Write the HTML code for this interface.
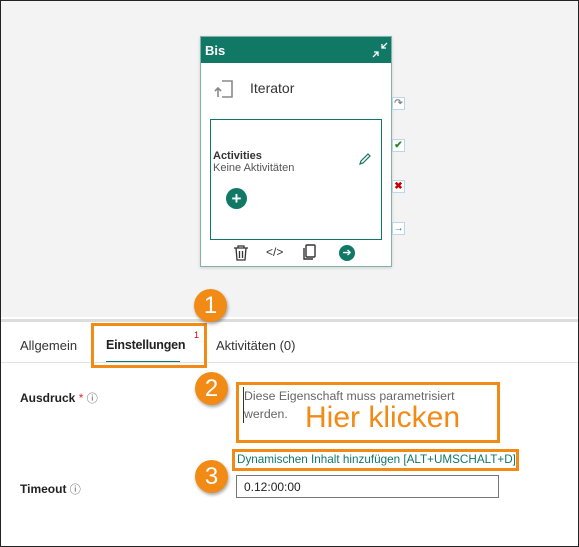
<!DOCTYPE html>
<html><head><meta charset="utf-8"><style>
*{margin:0;padding:0;box-sizing:border-box}
body{width:579px;height:547px;position:relative;overflow:hidden;font-family:"Liberation Sans",sans-serif;background:#fff}
.abs{position:absolute}
.frame{left:0;top:0;width:579px;height:547px;border:1px solid #222;}
.circ{width:33px;height:33px;border-radius:50%;background:#f28a16;color:#fff;font-size:24px;text-align:center;line-height:33px;box-shadow:1px 2px 3px rgba(0,0,0,.35)}
.ob{border:3px solid #f28a16}
.side{width:13px;height:13px;background:#fff;border:1px solid #bcd6f0;font-size:10px;line-height:11px;text-align:center;font-weight:bold}
</style></head><body>
<div class="abs" style="left:0;top:0;width:579px;height:317px;background:#f3f3f3"></div>
<div class="abs" style="left:0;top:319px;width:579px;height:3px;background:#ddd"></div>
<!-- card -->
<div class="abs" style="left:200px;top:36px;width:192px;height:231px;background:#fff;border:1px solid #7fb3aa;box-shadow:0 1px 3px rgba(0,0,0,.15)"></div>
<div class="abs" style="left:201px;top:37px;width:190px;height:26px;background:#117865;color:#fff;font-size:13px;font-weight:bold;padding:6px 0 0 4px">Bis</div>
<svg class="abs" style="left:370px;top:40px" width="20" height="20" viewBox="0 0 20 20" fill="none" stroke="#fff" stroke-width="1.3"><path d="M3 17l5-5M4 12h4v4M17 3l-5 5M12 4v4h4"/></svg>
<svg class="abs" style="left:214px;top:79px" width="20" height="20" viewBox="0 0 20 20" fill="none" stroke="#888" stroke-width="1.6"><path d="M8 2h10v16H8M4 18v-8M1 12l3-3 3 3"/></svg>
<div class="abs" style="left:250px;top:80px;font-size:14px;color:#333">Iterator</div>
<div class="abs" style="left:210px;top:119px;width:172px;height:121px;border:1px solid #117865"></div>
<div class="abs" style="left:213px;top:150px;font-size:11px;font-weight:bold;color:#333">Activities</div>
<div class="abs" style="left:213px;top:162px;font-size:11px;color:#555">Keine Aktivitäten</div>
<svg class="abs" style="left:358px;top:152px" width="14" height="14" viewBox="0 0 14 14" fill="none" stroke="#117865" stroke-width="1.2"><path d="M2 12l1-3 7-7 2 2-7 7z"/></svg>
<div class="abs" style="left:226px;top:188px;width:21px;height:21px;border-radius:50%;background:#117865;color:#fff;text-align:center;font-size:17px;line-height:21px;font-weight:bold">+</div>
<svg class="abs" style="left:233px;top:244px" width="16" height="18" viewBox="0 0 16 18" fill="none" stroke="#333" stroke-width="1.3"><path d="M1 4h14M5 4V2h6v2M3 4l1 12h8l1-12M6.5 7v7M9.5 7v7"/></svg>
<div class="abs" style="left:266px;top:245px;font-size:12px;color:#333">&lt;/&gt;</div>
<svg class="abs" style="left:301px;top:244px" width="16" height="18" viewBox="0 0 16 18" fill="none" stroke="#333" stroke-width="1.4"><rect x="5" y="1" width="9" height="12" rx="1"/><path d="M3 4v11h9"/></svg>
<div class="abs" style="left:339px;top:245px;width:16px;height:16px;border-radius:50%;background:#117865;color:#fff;font-size:11px;text-align:center;line-height:16px">➔</div>
<div class="abs side" style="left:392px;top:97px;color:#888">↷</div>
<div class="abs side" style="left:392px;top:139px;color:#2a8a2a">✔</div>
<div class="abs side" style="left:392px;top:180px;color:#c00">✖</div>
<div class="abs side" style="left:392px;top:222px;color:#1a6fd0">→</div>
<!-- tabs -->
<div class="abs" style="left:20px;top:338px;font-size:13px;color:#333">Allgemein</div>
<div class="abs" style="left:106px;top:338px;font-size:12.5px;font-weight:bold;color:#222;letter-spacing:-0.2px">Einstellungen</div>
<div class="abs" style="left:194px;top:330px;font-size:9px;color:#d00">1</div>
<div class="abs" style="left:106px;top:361px;width:74px;height:2px;background:#117865"></div>
<div class="abs" style="left:216px;top:338px;font-size:13px;color:#333">Aktivitäten (0)</div>
<div class="abs" style="left:0;top:362px;width:579px;height:1px;background:#e2e2e2"></div>
<div class="abs ob" style="left:91px;top:323px;width:116px;height:45px"></div>
<!-- form -->
<div class="abs" style="left:20px;top:390px;font-size:12px;font-weight:bold;color:#222">Ausdruck <span style="color:#c33;font-weight:normal">*</span> <span style="font-weight:normal;color:#555;font-size:11px">ⓘ</span></div>
<div class="abs ob" style="left:236px;top:382px;width:264px;height:61px"></div>
<div class="abs" style="left:243px;top:387px;width:250px;font-size:12.3px;color:#666;line-height:18px;border-left:1px solid #333">Diese Eigenschaft muss parametrisiert werden.</div>
<div class="abs" style="left:305px;top:401px;font-size:30px;color:#f28a16">Hier klicken</div>
<div class="abs ob" style="left:232px;top:449px;width:287px;height:22px"></div>
<div class="abs" style="left:237px;top:453px;font-size:11.7px;color:#117865">Dynamischen Inhalt hinzufügen [ALT+UMSCHALT+D]</div>
<div class="abs" style="left:20px;top:481px;font-size:12px;font-weight:bold;color:#222">Timeout <span style="font-weight:normal;color:#555;font-size:11px">ⓘ</span></div>
<div class="abs" style="left:236px;top:475px;width:263px;height:23px;border:1px solid #777;font-size:12px;padding:4px 0 0 7px;color:#222">0.12:00:00</div>
<div class="abs circ" style="left:194px;top:289px">1</div>
<div class="abs circ" style="left:195px;top:372px">2</div>
<div class="abs circ" style="left:195px;top:460px">3</div>
<div class="abs frame"></div>
</body></html>
